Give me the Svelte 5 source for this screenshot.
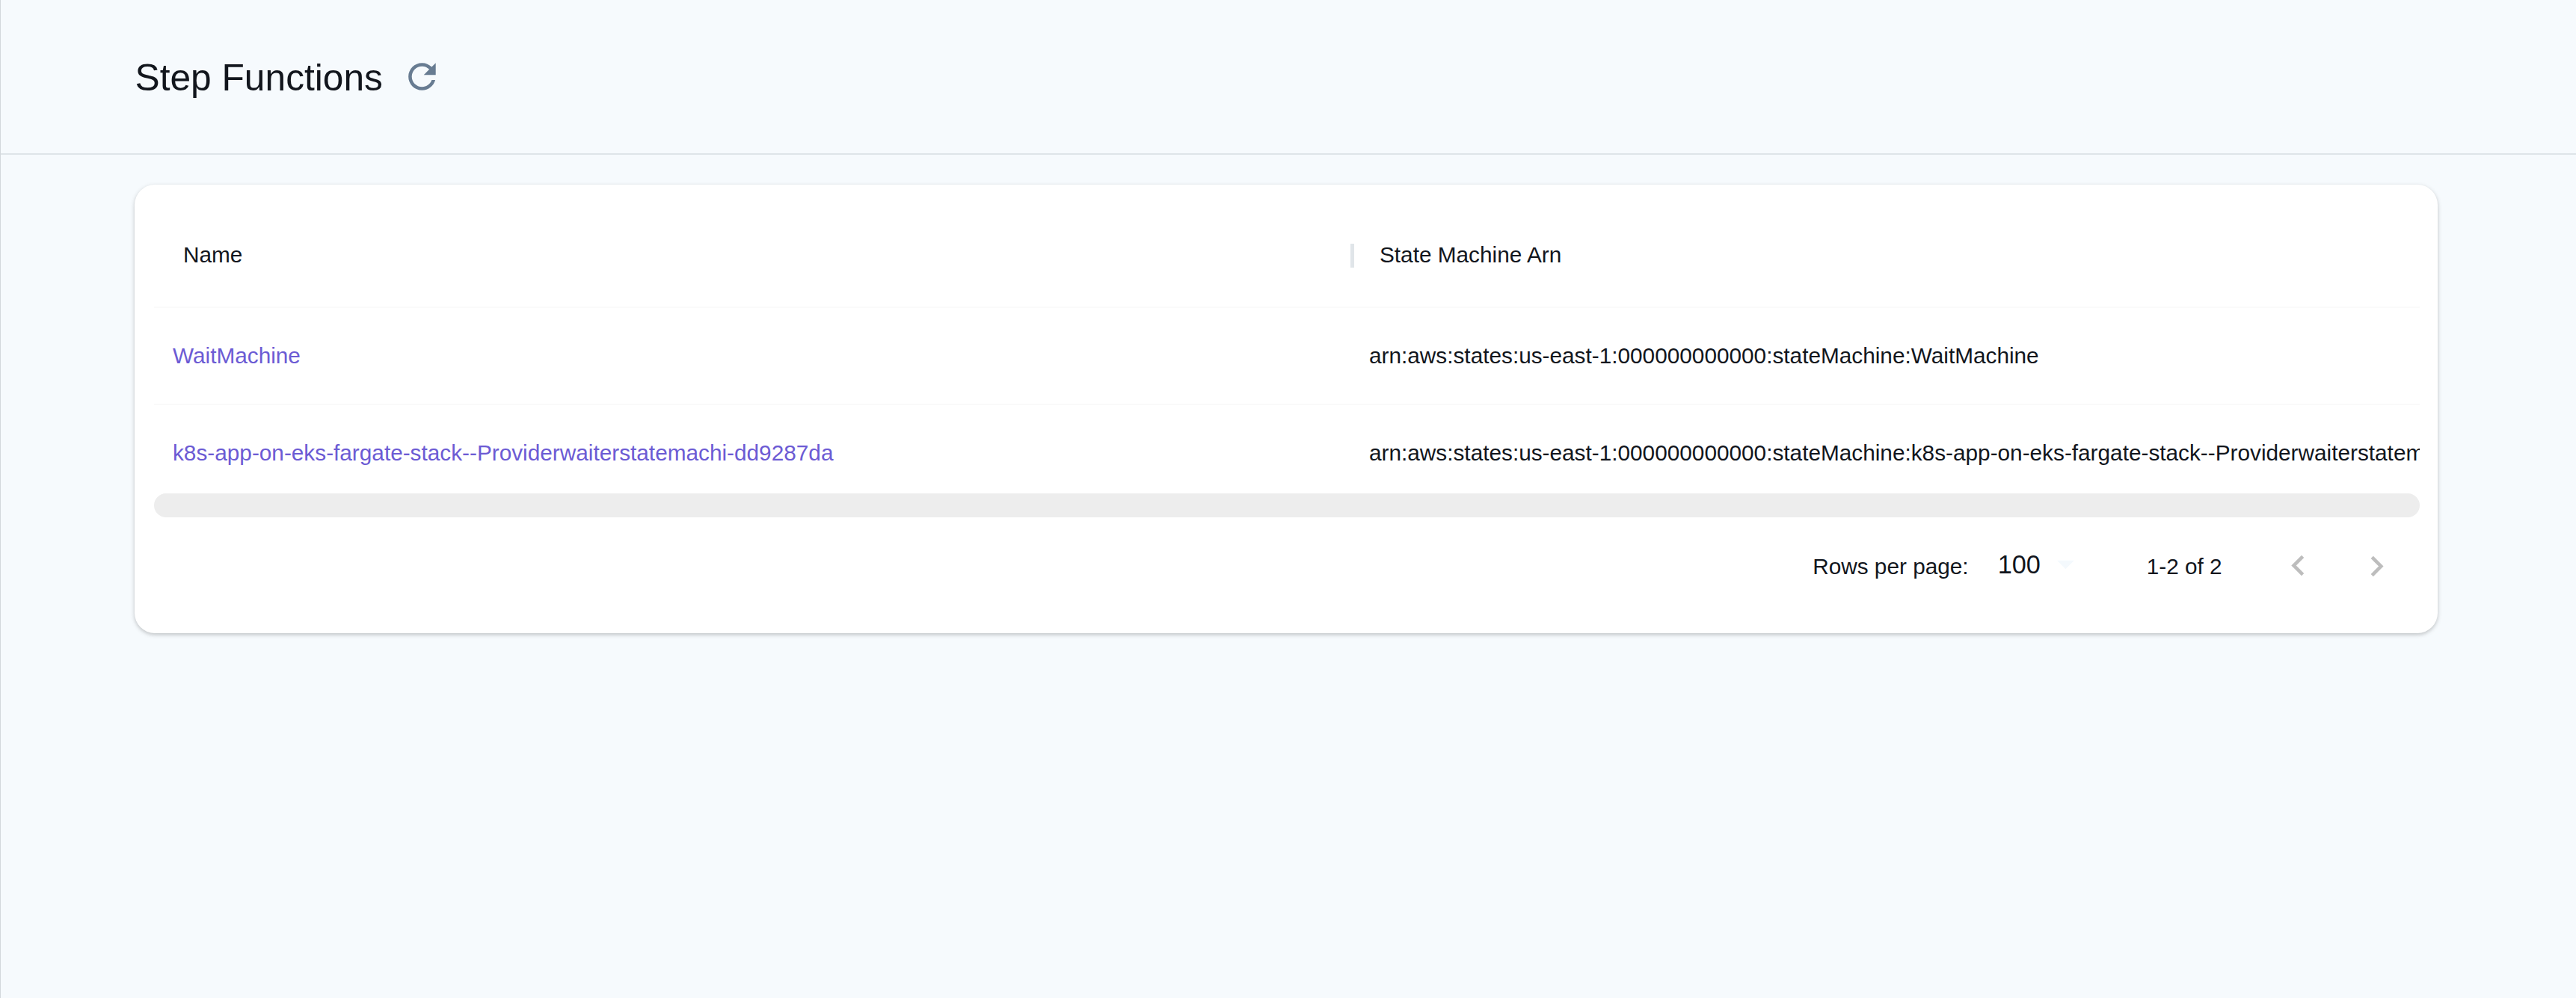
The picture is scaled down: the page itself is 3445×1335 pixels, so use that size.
<script>
  const rows = [
    { name: 'WaitMachine', arn: 'arn:aws:states:us-east-1:000000000000:stateMachine:WaitMachine' },
    {
      name: 'k8s-app-on-eks-fargate-stack--Providerwaiterstatemachi-dd9287da',
      arn: 'arn:aws:states:us-east-1:000000000000:stateMachine:k8s-app-on-eks-fargate-stack--Providerwaiterstatemachi-dd9287da',
    },
  ];
</script>

<div class="page">
  <header>
    <h1>Step Functions</h1>
    <svg class="icon refresh" viewBox="0 0 24 24" aria-label="Refresh">
      <path d="M17.65 6.35C16.2 4.9 14.21 4 12 4c-4.42 0-7.99 3.58-7.99 8s3.57 8 7.99 8c3.73 0 6.84-2.55 7.73-6h-2.08c-.82 2.33-3.04 4-5.65 4-3.31 0-6-2.69-6-6s2.69-6 6-6c1.66 0 3.14.69 4.22 1.78L13 11h7V4l-2.35 2.35z" />
    </svg>
  </header>

  <main class="card">
    <div class="row head">
      <div class="cell"><span>Name</span><i class="separator"></i></div>
      <div class="cell"><span>State Machine Arn</span></div>
    </div>
    <div class="body">
      {#each rows as row}
        <div class="row">
          <div class="cell"><a href="#{row.name}">{row.name}</a></div>
          <div class="cell">{row.arn}</div>
        </div>
      {/each}
    </div>
    <div class="scrollbar"></div>
    <footer>
      <span class="label">Rows per page:</span>
      <span class="size">100</span>
      <svg class="icon caret" viewBox="0 0 24 24"><path d="M7 10l5 5 5-5z" /></svg>
      <span class="label range">1-2 of 2</span>
      <svg class="icon prev" viewBox="0 0 24 24"><path d="M15.41 16.59L10.83 12l4.58-4.59L14 6l-6 6 6 6z" /></svg>
      <svg class="icon next" viewBox="0 0 24 24"><path d="M8.59 16.59L13.17 12 8.59 7.41 10 6l6 6-6 6z" /></svg>
    </footer>
  </main>
</div>

<style>
  :global(body) {
    background: #f6fafd;
  }
  .page {
    box-sizing: border-box;
    min-height: 1335px;
    border-left: 1px solid #d3d8dc;
    background: #f6fafd;
    color: #12161d;
    font: 29.77px/1.5 'Liberation Sans', Arial, sans-serif;
    overflow: hidden;
  }
  header {
    display: flex;
    align-items: center;
    height: 205px;
    padding-left: 179.5px;
    border-bottom: 2px solid #dee4e8;
  }
  h1 {
    margin: 0;
    padding-top: 4px;
    font-size: 49.7px;
    font-weight: 400;
    line-height: 1.2;
  }
  .icon {
    flex: none;
    width: 54.86px;
    height: 54.86px;
    fill: #bdbdbd;
  }
  .refresh {
    margin-left: 25px;
    fill: #687c92;
  }
  .card {
    box-sizing: border-box;
    width: 3080px;
    height: 600px;
    margin: 40px 0 0 179.4px;
    padding: 24px 24.6px 24px 25.6px;
    border-radius: 27px;
    background: #fff;
    box-shadow: 0 2px 6px rgba(0, 0, 0, 0.16), 0 2px 4px rgba(0, 0, 0, 0.08);
  }
  .row {
    display: flex;
    height: 128px;
    border-bottom: 2px solid #fafafa;
  }
  .cell {
    display: flex;
    flex: 0 0 1600px;
    box-sizing: border-box;
    align-items: center;
    padding-left: 25px;
    white-space: nowrap;
  }
  .head {
    height: 139px;
    overflow: hidden;
  }
  .head .cell {
    justify-content: space-between;
    padding: 2px 0 0 39px;
  }
  .separator {
    width: 5px;
    height: 32px;
    margin-right: -5px;
    background: #e0e5e9;
  }
  a {
    color: #6c5bd4;
    text-decoration: none;
  }
  .body {
    height: 248px;
    overflow: hidden;
  }
  .scrollbar {
    height: 32px;
    border-radius: 16px;
    background: #ededed;
  }
  footer {
    display: flex;
    align-items: center;
    justify-content: flex-end;
    height: 131px;
    padding-right: 30.4px;
  }
  .label {
    padding-top: 1px;
  }
  .size {
    margin-left: 39px;
    margin-bottom: 4px;
    font-size: 34.3px;
  }
  .caret {
    margin: 0 0 6px 6px;
    fill: #f4f9fd;
  }
  .range {
    margin-left: 81px;
  }
  .prev {
    margin-bottom: 2px;
    margin-left: 74px;
  }
  .next {
    margin-bottom: 1px;
    margin-left: 50px;
  }
</style>
